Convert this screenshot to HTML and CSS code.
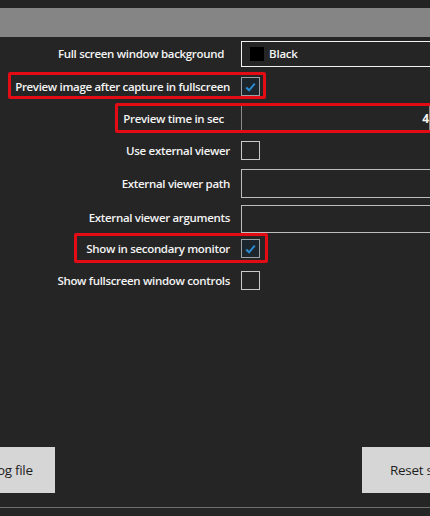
FILE: index.html
```html
<!DOCTYPE html>
<html>
<head>
<meta charset="utf-8">
<link rel="stylesheet" href="styles.css">
</head>
<body>
<div class="window">
  <div class="topstrip"></div>
  <div class="header"></div>
  <div class="form">
    <div class="row r1">
      <span class="label narrow">Full screen window background</span>
      <div class="combo"><span class="swatch"></span><span class="combo-text">Black</span></div>
    </div>
    <div class="row r2">
      <span class="hl hl2"></span>
      <span class="label">Preview image after capture in fullscreen</span>
      <span class="check checked"><svg viewBox="0 0 18 18" width="18" height="18"><path d="M4.5 9.5 L7.5 12.5 L13.5 5.5" fill="none" stroke="#2a8bd0" stroke-width="2.2"/></svg></span>
    </div>
    <div class="row r3">
      <span class="hl hl3"></span>
      <span class="label narrow">Preview time in sec</span>
      <div class="textbox tb3"><span class="num">4</span></div>
    </div>
    <div class="row r4">
      <span class="label">Use external viewer</span>
      <span class="check"></span>
    </div>
    <div class="row r5">
      <span class="label">External viewer path</span>
      <div class="textbox tb5"></div>
    </div>
    <div class="row r6">
      <span class="label">External viewer arguments</span>
      <div class="textbox tb6"></div>
    </div>
    <div class="row r7">
      <span class="hl hl7"></span>
      <span class="label">Show in secondary monitor</span>
      <span class="check checked"><svg viewBox="0 0 18 18" width="18" height="18"><path d="M4.5 9.5 L7.5 12.5 L13.5 5.5" fill="none" stroke="#2a8bd0" stroke-width="2.2"/></svg></span>
    </div>
    <div class="row r8">
      <span class="label">Show fullscreen window controls</span>
      <span class="check"></span>
    </div>
  </div>
  <div class="spacer"></div>
  <div class="footer">
    <button class="btn btn-left">Open log file</button>
    <button class="btn btn-right">Reset settings</button>
  </div>
  <div class="bottomline"></div>
</div>
</body>
</html>
```
FILE: styles.css
```css
html, body {
  margin: 0;
  padding: 0;
  background: #252525;
  overflow: hidden;
}
.window {
  width: 430px;
  height: 516px;
  overflow: hidden;
  display: flex;
  flex-direction: column;
  font-family: "Open Sans", "Noto Sans", sans-serif;
}
.topstrip {
  height: 8px;
  background: #232323;
}
.header {
  height: 29px;
  background: #858585;
}
.form {
  display: flex;
  flex-direction: column;
}
.row {
  position: relative;
  display: flex;
  align-items: center;
}
.r1 { height: 33px; }
.r2 { height: 33px; }
.r3 { height: 31px; }
.r4 { height: 32px; }
.r5 { height: 34px; }
.r6 { height: 34px; }
.r7 { height: 29px; }
.r8 { height: 35px; }
.label {
  width: 230px;
  flex: none;
  text-align: right;
  color: #f4f4f4;
  font-size: 11.5px;
  font-weight: 600;
  letter-spacing: -0.32px;
  white-space: nowrap;
  margin-right: 11px;
}
.label.narrow {
  width: 224px;
  margin-right: 17px;
}
.combo {
  flex: none;
  width: 260px;
  height: 24px;
  border: 1px solid #f2f2f2;
  display: flex;
  align-items: center;
  gap: 5px;
  padding-left: 8px;
}
.swatch {
  width: 14px;
  height: 14px;
  background: #000;
}
.combo-text {
  color: #f4f4f4;
  font-size: 11.5px;
  font-weight: 600;
  letter-spacing: -0.2px;
}
.check {
  flex: none;
  width: 17px;
  height: 17px;
  border: 1px solid #c9c9c9;
  display: flex;
  align-items: center;
  justify-content: center;
}
.check.checked {
  border-color: #9aa0a4;
  background: #1d252c;
}
.textbox {
  flex: none;
  width: 260px;
  border: 1px solid #bdbdbd;
  box-sizing: border-box;
}
.tb3 {
  width: 189px;
  height: 28px;
  border-color: #8a8a8a;
  display: flex;
  align-items: center;
  justify-content: flex-end;
}
.num {
  color: #f4f4f4;
  font-size: 12px;
  font-weight: 700;
}
.tb5 { height: 29px; }
.tb6 { height: 28px; margin-top: 4px; }
.hl {
  position: absolute;
  border: 3px solid #e30b14;
  border-radius: 2px;
  box-sizing: border-box;
  pointer-events: none;
}
.hl2 { left: 8px; width: 258px; top: 2px; height: 27px; }
.hl3 { left: 115px; width: 330px; top: 0px; height: 30px; }
.hl7 { left: 74px; width: 194px; top: -1px; height: 30px; }
.spacer {
  flex: 1;
}
.footer {
  display: flex;
  justify-content: space-between;
  height: 46px;
  margin-bottom: 14px;
}
.btn {
  flex: none;
  border: none;
  background: #d6d6d6;
  color: #1e1e1e;
  font-family: "Open Sans", "Noto Sans", sans-serif;
  font-size: 13.5px;
  letter-spacing: -0.3px;
  height: 46px;
  padding: 0;
}
.btn-left {
  width: 120px;
  margin-left: -65px;
}
.btn-right {
  width: 150px;
  margin-right: -82px;
  text-align: left;
  padding-left: 28px;
}
.bottomline {
  height: 1px;
  background: #6e6e6e;
  margin-bottom: 8px;
}
```
